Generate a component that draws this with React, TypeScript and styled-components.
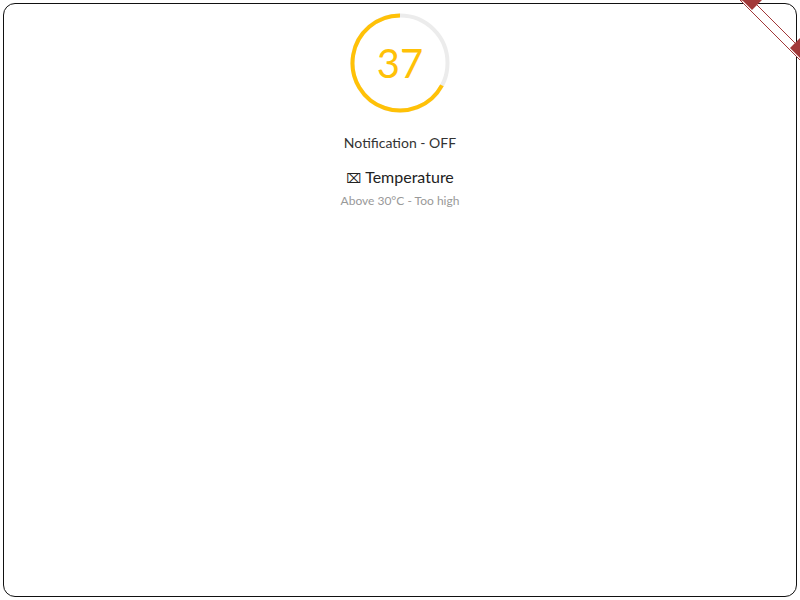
import React from "react";
import styled, { createGlobalStyle } from "styled-components";

const GlobalStyle = createGlobalStyle`
  html, body {
    margin: 0;
    padding: 0;
    background: #fff;
  }
  body {
    font-family: "Lato", "Noto Sans", sans-serif;
  }
`;

const Page = styled.div`
  position: relative;
  width: 800px;
  height: 600px;
  overflow: hidden;
  box-sizing: border-box;
  padding: 3px;
`;

const Frame = styled.div`
  box-sizing: border-box;
  height: 594px;
  border: 1px solid #111;
  border-radius: 12px;
  display: flex;
  flex-direction: column;
  align-items: center;
  padding-top: 9px;
`;

const Gauge = styled.div`
  position: relative;
  width: 100px;
  height: 100px;
`;

const GaugeValue = styled.span`
  position: absolute;
  inset: 0;
  display: flex;
  align-items: center;
  justify-content: center;
  font-size: 40px;
  font-weight: 400;
  color: #ffc107;
  line-height: 1;
`;

const Status = styled.div`
  margin-top: 22px;
  font-size: 14px;
  color: #333;
  line-height: 16px;
`;

const Title = styled.div`
  margin-top: 16px;
  font-size: 16px;
  color: #222;
  line-height: 20px;
`;

const Glyph = styled.span`
  font-family: "DejaVu Sans", sans-serif;
  font-size: 13px;
  margin-right: 4px;
`;

const Subtitle = styled.div`
  margin-top: 5px;
  font-size: 12px;
  color: #999;
  line-height: 14px;
`;

const Ribbon = styled.svg`
  position: absolute;
  top: 0;
  right: 0;
`;

const RIBBON_RED = "#a23838";

const CornerRibbon: React.FC = () => (
  <Ribbon width="60" height="60" viewBox="740 0 60 60">
    <polygon
      points="740,0 752,0 812,60 800,60"
      fill="#fff"
      stroke={RIBBON_RED}
      strokeWidth="1"
    />
    <polygon points="742,0 762,0 752,10" fill={RIBBON_RED} />
    <polygon points="800,38 800,58 790,48" fill={RIBBON_RED} />
  </Ribbon>
);

const ProgressRing: React.FC<{ value: number; fraction: number }> = ({
  value,
  fraction,
}) => {
  const r = 47.5;
  const start = (1 - fraction) * 2 * Math.PI;
  const sx = 50 + r * Math.sin(start);
  const sy = 50 - r * Math.cos(start);
  return (
    <Gauge>
      <svg width="100" height="100" viewBox="0 0 100 100">
        <circle cx="50" cy="50" r={r} fill="none" stroke="#ececec" strokeWidth="4" />
        <path
          d={`M ${sx} ${sy} A ${r} ${r} 0 1 1 50 ${50 - r}`}
          fill="none"
          stroke="#ffc107"
          strokeWidth="4"
        />
      </svg>
      <GaugeValue>{value}</GaugeValue>
    </Gauge>
  );
};

const App: React.FC = () => {
  return (
    <Page>
      <GlobalStyle />
      <Frame>
        <ProgressRing value={37} fraction={0.672} />
        <Status>Notification - OFF</Status>
        <Title>
          <Glyph>⌧</Glyph>Temperature
        </Title>
        <Subtitle>Above 30°C - Too high</Subtitle>
      </Frame>
      <CornerRibbon />
    </Page>
  );
};

export default App;
